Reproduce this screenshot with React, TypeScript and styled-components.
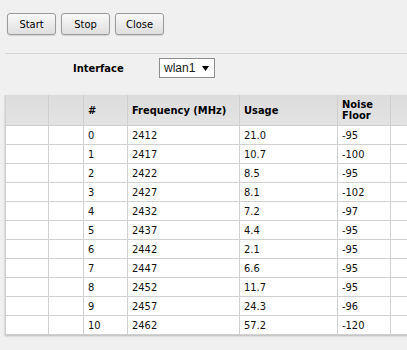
import React from "react";
import styled, { createGlobalStyle } from "styled-components";

const Global = createGlobalStyle`
  *, *::before, *::after { box-sizing: border-box; }
  html, body { margin: 0; padding: 0; background: #f0f0f0; overflow: hidden; }
  body {
    font-family: "DejaVu Sans Condensed", "DejaVu Sans", sans-serif;
    font-size: 11px;
    color: #000;
  }
`;

const Page = styled.div`
  width: 407px;
  height: 350px;
  overflow: hidden;
`;

const Toolbar = styled.div`
  display: flex;
  gap: 5px;
  padding: 13px 0 0 7px;
`;

const Button = styled.button`
  width: 49px;
  height: 22px;
  padding: 0;
  border: 1px solid #9a9a9a;
  border-radius: 3px;
  background: linear-gradient(#f9f9f9, #dedede);
  box-shadow: 0 1px 1px rgba(0, 0, 0, 0.12);
  font-family: inherit;
  font-size: 11px;
  color: #000;
`;

const Content = styled.div`
  padding-left: 5px;
`;

const Separator = styled.div`
  margin-top: 18px;
  height: 1px;
  background: #d6d6d6;
`;

const FormRow = styled.div`
  display: flex;
  align-items: center;
  margin-top: 4px;
  padding-left: 68px;
  height: 20px;
`;

const Label = styled.div`
  width: 86px;
  font-weight: bold;
`;

const Select = styled.div`
  width: 56px;
  height: 20px;
  display: flex;
  align-items: center;
  justify-content: space-between;
  padding: 0 5px 0 4px;
  background: #fff;
  border: 1px solid #8c8c8c;
  font-family: "Liberation Sans", Arial, sans-serif;
  font-size: 12px;
  color: #1a1a1a;
`;

const TableWrap = styled.div`
  margin-top: 17px;
  width: 440px;
`;

const Table = styled.table`
  border-collapse: separate;
  border-spacing: 0;
  table-layout: fixed;
  width: 436px;
  border-left: 1px solid #d0d0d0;
  box-shadow: 0 1px 2px rgba(0, 0, 0, 0.25);
`;

const Th = styled.th<{ $w: number }>`
  width: ${(p) => p.$w}px;
  height: 31px;
  padding: 0 4px;
  text-align: left;
  vertical-align: middle;
  font-weight: bold;
  line-height: 11px;
  background: linear-gradient(#dcdcdc, #e3e3e3);
  border-right: 1px solid #cfcfcf;
  border-bottom: 1px solid #cfcfcf;
`;

const Td = styled.td`
  height: 19px;
  padding: 0 4px;
  background: #fff;
  border-right: 1px solid #d0d0d0;
  border-bottom: 1px solid #d0d0d0;
  white-space: nowrap;
  color: #111;
`;

const rows: [number, number, string, number][] = [
  [0, 2412, "21.0", -95],
  [1, 2417, "10.7", -100],
  [2, 2422, "8.5", -95],
  [3, 2427, "8.1", -102],
  [4, 2432, "7.2", -97],
  [5, 2437, "4.4", -95],
  [6, 2442, "2.1", -95],
  [7, 2447, "6.6", -95],
  [8, 2452, "11.7", -95],
  [9, 2457, "24.3", -96],
  [10, 2462, "57.2", -120],
];

export default function App() {
  return (
    <Page>
      <Global />
      <Toolbar>
        <Button>Start</Button>
        <Button>Stop</Button>
        <Button>Close</Button>
      </Toolbar>
      <Content>
        <Separator />
        <FormRow>
          <Label>Interface</Label>
          <Select>
            <span>wlan1</span>
            <svg width="7" height="7" viewBox="0 0 7 7">
              <polygon points="0,1 7,1 3.5,6" fill="#000" />
            </svg>
          </Select>
        </FormRow>
        <TableWrap>
          <Table>
            <thead>
              <tr>
                <Th $w={43}></Th>
                <Th $w={35}></Th>
                <Th $w={44}>#</Th>
                <Th $w={112}>Frequency (MHz)</Th>
                <Th $w={98}>Usage</Th>
                <Th $w={53}>Noise Floor</Th>
                <Th $w={51}></Th>
              </tr>
            </thead>
            <tbody>
              {rows.map(([i, f, u, n]) => (
                <tr key={i}>
                  <Td></Td>
                  <Td></Td>
                  <Td>{i}</Td>
                  <Td>{f}</Td>
                  <Td>{u}</Td>
                  <Td>{n}</Td>
                  <Td></Td>
                </tr>
              ))}
            </tbody>
          </Table>
        </TableWrap>
      </Content>
    </Page>
  );
}
